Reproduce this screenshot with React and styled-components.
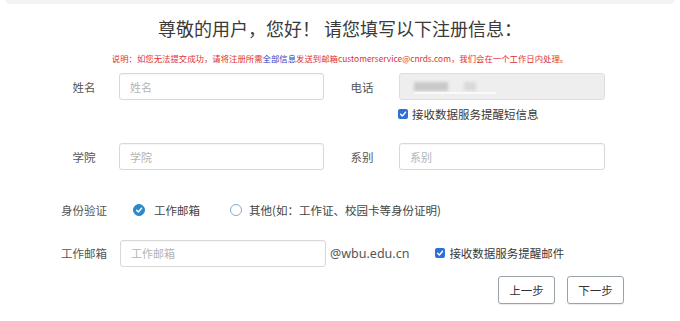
import React from "react";
import styled, { createGlobalStyle } from "styled-components";

const Global = createGlobalStyle`
  html, body { margin: 0; padding: 0; background: #fff; }
  body { font-family: "Noto Sans", "Noto Sans CJK SC", sans-serif; color: #333; }
  * { box-sizing: border-box; }
`;

const Page = styled.div`
  width: 680px;
  height: 321px;
  overflow: hidden;
  background: #fff;
  display: flex;
  flex-direction: column;
`;

const TopEdge = styled.div`
  height: 4px;
  margin: 0 6px;
  background: #f3f3f3;
  border-radius: 0 0 6px 6px;
`;

const Title = styled.h1`
  margin: 12px 0 0;
  font-family: "Noto Sans CJK SC", sans-serif;
  font-weight: 400;
  font-size: 18px;
  line-height: 24px;
  color: #3a3a3a;
  text-align: center;
  letter-spacing: 0;
`;

const Notice = styled.p`
  margin: 13px 0 0;
  font-family: "Noto Sans CJK SC", sans-serif;
  font-size: 8.4px;
  line-height: 10px;
  color: #e0322c;
  text-align: center;
`;

const Blue = styled.span`
  color: #2c3cc4;
`;

const Form = styled.div`
  padding-left: 60px;
  display: flex;
  flex-direction: column;
`;

const Row = styled.div`
  display: flex;
  align-items: center;
  margin-top: ${(p) => p.$top}px;
  height: ${(p) => p.$h || 27}px;
`;

const Label = styled.span`
  width: 48px;
  text-align: center;
  font-family: "Noto Sans CJK SC", sans-serif;
  font-size: 11.5px;
  color: #555;
  margin-left: ${(p) => p.$ml || 0}px;
`;

const Input = styled.input`
  margin-left: ${(p) => p.$ml || 11}px;
  width: ${(p) => p.$w || 205}px;
  height: 27px;
  border: 1px solid #d8d8d8;
  border-radius: 3px;
  padding: 0 10px;
  font-family: "Noto Sans CJK SC", sans-serif;
  font-size: 11px;
  color: #333;
  outline: none;
  box-shadow: inset 0 1px 1px rgba(0, 0, 0, 0.04);
  &::placeholder { color: #b4b4b4; }
`;

const Disabled = styled.div`
  margin-left: 13px;
  width: 206px;
  height: 27px;
  border: 1px solid #dedede;
  border-radius: 3px;
  background: #eeeeee;
  padding: 8px 0 0 14px;
  display: flex;
  flex-direction: column;
  gap: 1px;
`;

const BlurLine = styled.div`
  display: flex;
  gap: 16px;
  height: 9px;
`;

const Blob = styled.span`
  display: block;
  width: ${(p) => p.$w}px;
  height: 9px;
  background: ${(p) => p.$c};
  filter: blur(1.5px);
`;

const Streak = styled.span`
  display: block;
  width: 82px;
  height: 2px;
  background: #fafafa;
  filter: blur(0.6px);
`;

const CheckRow = styled.div`
  display: flex;
  align-items: center;
  margin-left: ${(p) => p.$ml}px;
  margin-top: ${(p) => p.$top || 0}px;
`;

const Box = styled.span`
  width: 10px;
  height: 10px;
  border-radius: 2px;
  background: #2f6fd8;
  display: flex;
  align-items: center;
  justify-content: center;
  flex: none;
`;

const CheckText = styled.span`
  margin-left: 4px;
  font-family: "Noto Sans CJK SC", sans-serif;
  font-size: 11.5px;
  line-height: 14px;
  color: #3a3a3a;
`;

const Radio = styled.span`
  width: 12px;
  height: 12px;
  border-radius: 50%;
  flex: none;
  margin-left: ${(p) => p.$ml}px;
  display: flex;
  align-items: center;
  justify-content: center;
  background: ${(p) => (p.$on ? "#2b8ac6" : "#fff")};
  border: 1px solid ${(p) => (p.$on ? "#2b8ac6" : "#86aec6")};
`;

const RadioText = styled.span`
  margin-left: ${(p) => p.$ml || 9}px;
  font-family: "Noto Sans CJK SC", sans-serif;
  font-size: 11.5px;
  color: #444;
`;

const Domain = styled.span`
  margin-left: 4px;
  font-family: "Noto Sans", sans-serif;
  font-size: 12.5px;
  color: #555;
`;

const Buttons = styled.div`
  display: flex;
  justify-content: flex-end;
  gap: 12px;
  padding-right: 56px;
  margin-top: 9px;
`;

const Button = styled.button`
  width: 57px;
  height: 28px;
  border: 1px solid #9aa3a8;
  border-radius: 3px;
  background: #fff;
  font-family: "Noto Sans CJK SC", sans-serif;
  font-size: 11.5px;
  color: #333;
  padding: 0;
  box-shadow: 0 1px 1px rgba(0, 0, 0, 0.08);
`;

const Tick = ({ size = 8 }) => (
  <svg width={size} height={size} viewBox="0 0 10 10">
    <path d="M2 5.2 L4.2 7.4 L8.2 2.8" fill="none" stroke="#fff" strokeWidth="1.8" strokeLinecap="round" strokeLinejoin="round" />
  </svg>
);

export default function App() {
  return (
    <Page>
      <Global />
      <TopEdge />
      <Title>尊敬的用户，您好！ 请您填写以下注册信息：</Title>
      <Notice>
        说明：如您无法提交成功，请将注册所需<Blue>全部信息</Blue>发送到邮箱customerservice@cnrds.com，我们会在一个工作日内处理。
      </Notice>
      <Form>
        <Row $top={10}>
          <Label>姓名</Label>
          <Input placeholder="姓名" />
          <Label $ml={14}>电话</Label>
          <Disabled>
            <BlurLine>
              <Blob $w={34} $c="#c9c9c9" />
              <Blob $w={12} $c="#dadada" />
            </BlurLine>
            <Streak />
          </Disabled>
        </Row>
        <CheckRow $ml={338} $top={7}>
          <Box><Tick /></Box>
          <CheckText>接收数据服务提醒短信息</CheckText>
        </CheckRow>
        <Row $top={22}>
          <Label>学院</Label>
          <Input placeholder="学院" />
          <Label $ml={14}>系别</Label>
          <Input $ml={13} $w={206} placeholder="系别" />
        </Row>
        <Row $top={27} $h={26}>
          <Label>身份验证</Label>
          <Radio $on $ml={25}><Tick size={8} /></Radio>
          <RadioText>工作邮箱</RadioText>
          <Radio $ml={30} />
          <RadioText $ml={7}>其他(如：工作证、校园卡等身份证明)</RadioText>
        </Row>
        <Row $top={16} $h={28}>
          <Label>工作邮箱</Label>
          <Input $ml={12} $w={206} placeholder="工作邮箱" />
          <Domain>@wbu.edu.cn</Domain>
          <CheckRow $ml={26}>
            <Box><Tick /></Box>
            <CheckText>接收数据服务提醒邮件</CheckText>
          </CheckRow>
        </Row>
      </Form>
      <Buttons>
        <Button>上一步</Button>
        <Button>下一步</Button>
      </Buttons>
    </Page>
  );
}
